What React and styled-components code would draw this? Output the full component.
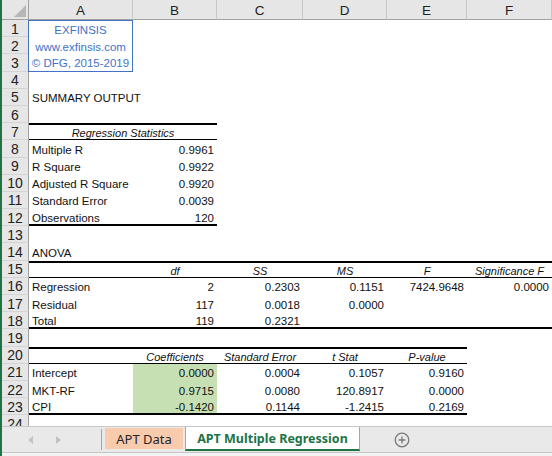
import React from 'react'
import styled, { createGlobalStyle, css } from 'styled-components'

const GlobalStyle = createGlobalStyle`
  html, body {
    margin: 0;
    padding: 0;
    background: #fff;
    overflow: hidden;
  }
`

const COLS = ['A', 'B', 'C', 'D', 'E', 'F']
const ROW_H = 17.2
const BRAND = '#4472c4'

// each row: cells (A..F), how many columns carry its borders, and border kinds
const ROWS = [
	{ cells: [{ v: 'EXFINSIS', brand: 'top' }] },
	{ cells: [{ v: 'www.exfinsis.com', brand: 'mid' }] },
	{ cells: [{ v: '© DFG, 2015-2019', brand: 'bottom' }] },
	{},
	{ cells: ['SUMMARY OUTPUT'] },
	{},
	{ head: true, width: 2, top: 'thick', bottom: 'thin', cells: [{ v: 'Regression Statistics', span: 2 }] },
	{ width: 2, cells: ['Multiple R', '0.9961'] },
	{ width: 2, cells: ['R Square', '0.9922'] },
	{ width: 2, cells: ['Adjusted R Square', '0.9920'] },
	{ width: 2, cells: ['Standard Error', '0.0039'] },
	{ width: 2, bottom: 'thick', cells: ['Observations', '120'] },
	{},
	{ cells: ['ANOVA'] },
	{ head: true, width: 6, top: 'thick', bottom: 'thin', cells: ['', 'df', 'SS', 'MS', 'F', 'Significance F'] },
	{ width: 6, cells: ['Regression', '2', '0.2303', '0.1151', '7424.9648', '0.0000'] },
	{ width: 6, cells: ['Residual', '117', '0.0018', '0.0000'] },
	{ width: 6, bottom: 'thick', cells: ['Total', '119', '0.2321'] },
	{},
	{ head: true, width: 5, top: 'thick', bottom: 'thin', cells: ['', 'Coefficients', 'Standard Error', 't Stat', 'P-value'] },
	{ width: 5, fill: true, cells: ['Intercept', '0.0000', '0.0004', '0.1057', '0.9160'] },
	{ width: 5, fill: true, cells: ['MKT-RF', '0.9715', '0.0080', '120.8917', '0.0000'] },
	{ width: 5, fill: true, bottom: 'thick', cells: ['CPI', '-0.1420', '0.1144', '-1.2415', '0.2169'] },
	{},
]

const Window = styled.div`
	display: flex;
	flex-direction: column;
	width: 552px;
	height: 456px;
	box-sizing: border-box;
	border-left: 2px solid #217346;
	background: #fff;
	overflow: hidden;
`

const Sheet = styled.div`
	flex: 1;
	min-height: 0;
	display: grid;
	grid-template-columns: 27px 104px 84px 86px 84px 80px 1fr;
	grid-template-rows: 20px;
	grid-auto-rows: ${ROW_H}px;
	overflow: hidden;
	font-family: 'Liberation Sans', Arial, sans-serif;
	font-size: 11.5px;
	color: #111;
`

const headerBox = css`
	box-sizing: border-box;
	display: flex;
	align-items: center;
	justify-content: center;
	background: #e6e6e6;
	color: #222;
`

const Corner = styled.div`
	${headerBox};
	justify-content: flex-end;
	align-items: flex-end;
	padding: 0 2px 2px 0;
	border-right: 1px solid #a0a0a0;
	border-bottom: 1px solid #a0a0a0;
`

const ColHead = styled.div`
	${headerBox};
	font-size: 13.5px;
	padding-top: 1px;
	border-right: 1px solid #c8c8c8;
	border-bottom: 1px solid #a0a0a0;
`

const RowHead = styled.div`
	${headerBox};
	font-size: 14px;
	padding-top: 1px;
	border-right: 1px solid #a0a0a0;
	border-bottom: 1px solid #d4d4d4;
`

const lineFor = kind =>
	kind === 'thick' ? '2px solid #000' : kind === 'thin' ? '1px solid #000' : 'none'

const brandBorders = {
	top: css`
		border: 1px solid ${BRAND};
		border-bottom: none;
	`,
	mid: css`
		border-left: 1px solid ${BRAND};
		border-right: 1px solid ${BRAND};
	`,
	bottom: css`
		border: 1px solid ${BRAND};
		border-top: none;
	`,
}

const Cell = styled.div`
	box-sizing: border-box;
	display: flex;
	align-items: center;
	padding: 2px 3px 0;
	white-space: nowrap;
	grid-column: span ${p => p.$span};
	justify-content: ${p =>
		p.$align === 'right' ? 'flex-end' : p.$align === 'center' ? 'center' : 'flex-start'};
	font-style: ${p => (p.$italic ? 'italic' : 'normal')};
	font-size: ${p => (p.$italic ? '11px' : 'inherit')};
	background: ${p => (p.$fill ? '#c6e0b4' : 'transparent')};
	border-top: ${p => lineFor(p.$top)};
	border-bottom: ${p => lineFor(p.$bottom)};
	${p =>
		p.$brand &&
		css`
			color: ${BRAND};
			margin-left: -1px;
			${brandBorders[p.$brand]};
		`}
`

const TabBar = styled.div`
	flex: none;
	height: 27px;
	display: flex;
	align-items: flex-start;
	box-sizing: border-box;
	background: #e9e9e9;
	border-top: 1px solid #c8c8c8;
	border-bottom: 1px solid #c6c6c6;
	font-family: 'Noto Sans', 'Open Sans', sans-serif;
	font-size: 12.5px;
`

const StatusEdge = styled.div`
	flex: none;
	height: 3px;
	background: #f3f3f3;
`

const Nav = styled.div`
	width: 98px;
	height: 26px;
	display: flex;
	align-items: center;
	gap: 23px;
	padding-left: 26px;
	box-sizing: border-box;
`

const Divider = styled.div`
	width: 1px;
	height: 21px;
	margin: 2px 3px 0 1px;
	background: #a6a6a6;
`

const Tab = styled.div`
	box-sizing: border-box;
	display: flex;
	align-items: center;
	justify-content: center;
	${p =>
		p.$active
			? css`
					height: 24px;
					width: 175px;
					margin-left: 2px;
					background: #fff;
					color: #217346;
					font-weight: 700;
					border-left: 1px solid #a6a6a6;
					border-right: 1px solid #a6a6a6;
					border-bottom: 2px solid #217346;
			  `
			: css`
					height: 21px;
					width: 78px;
					margin-top: 1px;
					background: ${p.$color};
					color: #262626;
					font-size: 13px;
			  `}
`

const AddButton = styled.div`
	display: flex;
	align-items: center;
	height: 26px;
	margin-left: 34px;
`

const CornerMark = () => (
	<svg width="12" height="12" viewBox="0 0 12 12">
		<polygon points="12,0 12,12 0,12" fill="#b7b7b7" />
	</svg>
)

const Arrow = ({ dir }) => (
	<svg width="5" height="8" viewBox="0 0 5 8">
		<polygon points={dir === 'left' ? '5,0 5,8 0,4' : '0,0 0,8 5,4'} fill="#c3c3c3" />
	</svg>
)

const PlusCircle = () => (
	<svg width="16" height="16" viewBox="0 0 16 16">
		<circle cx="8" cy="8" r="6.8" fill="none" stroke="#7a7a7a" strokeWidth="1.3" />
		<path d="M8 4.6v6.8M4.6 8h6.8" stroke="#7a7a7a" strokeWidth="1.3" />
	</svg>
)

const alignFor = (row, index) => {
	if (row.head) return 'center'
	return index === 0 ? 'left' : 'right'
}

const renderRow = (row, r) => {
	const cells = []
	const width = row.width || 0
	let col = 0
	const source = row.cells || []
	while (col < COLS.length) {
		const raw = source[col]
		const item = raw && typeof raw === 'object' ? raw : { v: raw || '' }
		const span = item.span || 1
		const inside = col < width
		cells.push(
			<Cell
				key={`${r}-${col}`}
				$span={span}
				$align={item.brand ? 'center' : alignFor(row, col)}
				$italic={row.head}
				$fill={row.fill && col === 1}
				$top={inside ? row.top : undefined}
				$bottom={inside ? row.bottom : undefined}
				$brand={item.brand}
			>
				{item.v}
			</Cell>,
		)
		col += span
	}
	return [<RowHead key={`h${r}`}>{r + 1}</RowHead>, ...cells]
}

const App = () => (
	<>
		<GlobalStyle />
		<Window>
			<Sheet>
				<Corner>
					<CornerMark />
				</Corner>
				{COLS.map(c => (
					<ColHead key={c}>{c}</ColHead>
				))}
				{ROWS.map(renderRow)}
			</Sheet>
			<TabBar>
				<Nav>
					<Arrow dir="left" />
					<Arrow dir="right" />
				</Nav>
				<Divider />
				<Tab $color="#f8cbad">APT Data</Tab>
				<Tab $active>APT Multiple Regression</Tab>
				<AddButton>
					<PlusCircle />
				</AddButton>
			</TabBar>
			<StatusEdge />
		</Window>
	</>
)

export default App
